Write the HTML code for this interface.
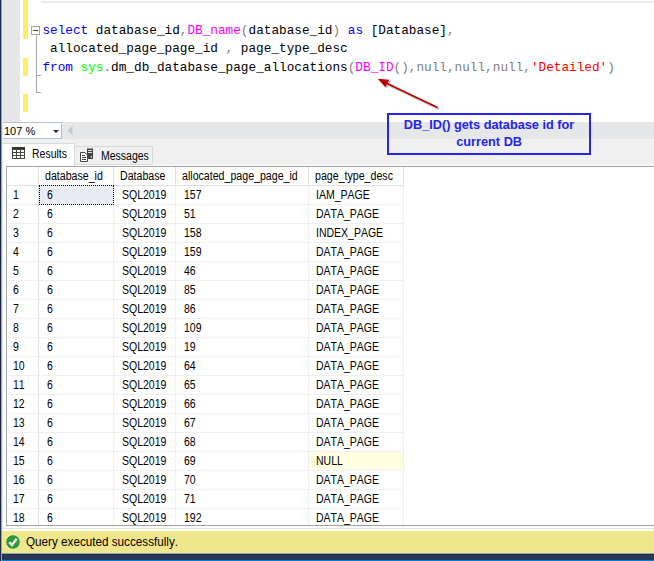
<!DOCTYPE html>
<html><head><meta charset="utf-8"><title>Query</title>
<style>
html,body{margin:0;padding:0;}
body{font-kerning:none;width:654px;height:561px;position:relative;overflow:hidden;background:#fff;font-family:"Liberation Sans",sans-serif;}
.abs{position:absolute;}
#lb{left:0;top:0;width:1px;height:561px;background:#1f2d4d;border-right:1px solid #95a1c3;}
#lb2{left:2px;top:0;width:1px;height:531px;background:#eaeaea;}
#margin{left:2px;top:0;width:18px;height:122px;background:#e6e7e8;}
.y{left:23px;width:5px;background:#ffee62;}
#topline{left:41px;top:0;width:613px;height:3px;background:#e9e9f3;border-top:1px solid #fff;box-sizing:border-box;border-left:1px solid #e9e9f3;}
.code{left:42.4px;font-family:"Liberation Mono",monospace;font-size:12.73px;line-height:18px;white-space:pre;color:#000;height:18px;}
.k{color:#0000ff}.f{color:#ff00ff}.g{color:#00ff00}.o{color:#808080}.s{color:#ff0000}
#zoombar{left:2px;top:122px;width:652px;height:17px;background:#e6e7e8;}
#combo{left:2px;top:122px;width:58px;height:15px;border:1px solid #b4c0d8;background:#fff;}
#combo span{position:absolute;left:1px;top:2px;font-size:11px;line-height:13px;color:#000;}
#tabsbg{left:2px;top:139px;width:652px;height:27px;background:#f0f0f0;}
#paneTop{left:2px;top:165px;width:652px;height:2px;background:#fff;}
#paneLine{left:6px;top:166px;width:648px;height:1px;background:#a0a0a8;}
#tabR{left:2px;top:143px;width:73px;height:23px;background:#fff;border:1px solid #dadada;border-bottom:none;border-left:none;padding-left:2px;box-sizing:border-box;}
#tabM{left:74px;top:146px;width:79px;height:19px;background:#f0f0f0;border:1px solid #d9d9d9;box-sizing:border-box;}
.tabtxt{font-size:12px;line-height:14px;color:#000;transform:scaleX(.875);transform-origin:0 0;white-space:nowrap;}
.grid{position:absolute;left:6px;top:166px;width:398px;height:359px;border-left:1px solid #a8a8b0;border-top:1px solid #a0a0a8;box-sizing:border-box;overflow:hidden;background:#fff;}
.hrow,.row{height:19px;position:relative;white-space:nowrap;}
.hrow{height:19px;}
.c{position:absolute;top:0;height:100%;box-sizing:border-box;border-right:1px solid #f0f0f0;border-bottom:1px solid #f0f0f0;font-size:12px;line-height:18px;color:#000;}
.hrow .c{border-right:1px solid #e0e0e0;border-bottom:1px solid #e0e0e0;}
.c0{left:0;width:32px;}
.c1{left:32px;width:75px;}
.c2{left:107px;width:62px;}
.c3{left:169px;width:133px;}
.c4{left:302px;width:95px;}
.t{display:inline-block;transform:scaleX(.875);transform-origin:0 50%;white-space:nowrap;position:absolute;top:0;}
.hrow .c .t{left:6px;}
.row .c .t{left:7.5px;}
.row .c0 .t{left:5.7px;}
.row .c4 .t{left:6.8px;}
.hrow .c .t{transform:scaleX(.885);}
.row .c0{border-right:1px solid #e0e0e0;}
.nul{background:#ffffe1;}
.nosel{}
#selbox{left:39px;top:185px;width:75px;height:20px;box-sizing:border-box;border:1px dotted #000;background:#e9edf3;}
#selbox span{position:absolute;left:6.5px;top:0px;font-size:12px;line-height:18px;transform:scaleX(.875);transform-origin:0 50%;}
#status{left:2px;top:531px;width:652px;height:22px;background:#f0e68c;}
#status .txt{position:absolute;left:23.6px;top:3px;font-size:12px;line-height:16px;color:#000;white-space:nowrap;transform:scaleX(.974);transform-origin:0 0;}
#bot1{left:0;top:554px;width:654px;height:6px;background:#293755;border-top:1px solid #1f2d4d;box-sizing:border-box;}
#bot0{left:1px;top:553px;width:653px;height:1px;background:#95a1c3;}
#bot2{left:0;top:560px;width:654px;height:1px;background:#0a7acc;}
#gl1{left:6px;top:525px;width:648px;height:1px;background:#a0a0a0;}
#gl2{left:2px;top:528px;width:652px;height:1px;background:#e3e3e3;}
#note{left:387px;top:113px;width:204px;height:42px;border:2px solid #2424ee;box-sizing:border-box;color:#2424ee;font-weight:bold;text-align:center;font-size:13.6px;line-height:17px;padding-top:1px;}
#note span{display:inline-block;white-space:nowrap;transform:scaleX(.937);transform-origin:50% 50%;}
</style></head><body>
<div class="abs" id="margin"></div>
<div class="abs y" style="top:0;height:39px"></div>
<div class="abs y" style="top:58px;height:18px"></div>
<div class="abs y" style="top:94px;height:18px"></div>
<div class="abs" id="topline"></div>
<svg class="abs" style="left:30px;top:24px" width="14" height="72" viewBox="0 0 14 72">
<path d="M6.5 11.5V68.5H11M6.5 51.5H11" fill="none" stroke="#a5a5a5" stroke-width="1"/>
<rect x="1.5" y="2.5" width="8" height="8" fill="#fff" stroke="#a5a5a5"/>
<path d="M3 6.5H8" stroke="#444" stroke-width="1"/>
</svg>
<div class="abs code" style="top:22px"><span class="k">select</span> database_id<span class="o">,</span><span class="f">DB_name</span><span class="o">(</span>database_id<span class="o">)</span> <span class="k">as</span> [Database]<span class="o">,</span></div>
<div class="abs code" style="top:40px"> allocated_page_page_id <span class="o">,</span> page_type_desc</div>
<div class="abs code" style="top:59px"><span class="k">from</span> <span class="g">sys</span><span class="o">.</span>dm_db_database_page_allocations<span class="o">(</span><span class="f">DB_ID</span><span class="o">(),null,null,null,</span><span class="s">'Detailed'</span><span class="o">)</span></div>
<div class="abs" id="zoombar"></div>
<div class="abs" id="combo"><span>107 %</span>
<svg class="abs" style="left:50px;top:7px" width="7" height="4" viewBox="0 0 7 4"><path d="M0 0H6L3 3Z" fill="#1b2a4a"/></svg></div>
<svg class="abs" style="left:67px;top:126px" width="6" height="9" viewBox="0 0 6 9"><path d="M5.5 0V9L0.5 4.5Z" fill="#c3c6cf"/></svg>
<div class="abs" id="tabsbg"></div>
<div class="abs" id="paneTop"></div><div class="abs" id="paneLine"></div>
<div class="abs" id="tabM">
<svg class="abs" style="left:4px;top:1px" width="16" height="15" viewBox="0 0 16 15">
<rect x="8" y="0.5" width="6" height="10.5" fill="#444"/>
<path d="M9 2.5H13M9 4.5H13" stroke="#ddd" stroke-width="1"/>
<rect x="11.5" y="8" width="1.5" height="1.5" fill="#ddd"/>
<path d="M1.5 4.5H6L8.500 7V13.500H1.500Z" fill="#fff" stroke="#444" stroke-width="1"/>
<path d="M3 7.500H6M3 9.500H7M3 11.500H7" stroke="#444" stroke-width="1"/>
</svg>
<div class="abs tabtxt" style="left:26px;top:2px">Messages</div>
</div>
<div class="abs" id="tabR">
<svg class="abs" style="left:10px;top:3px" width="14" height="13" viewBox="0 0 14 13">
<rect x="0" y="0" width="13" height="12" fill="#444"/><rect x="0" y="0" width="13" height="2" fill="#333"/>
<g fill="#fff"><rect x="1" y="3" width="3" height="2"/><rect x="5" y="3" width="3" height="2"/><rect x="9" y="3" width="3" height="2"/>
<rect x="1" y="6" width="3" height="2"/><rect x="5" y="6" width="3" height="2"/><rect x="9" y="6" width="3" height="2"/>
<rect x="1" y="9" width="3" height="2"/><rect x="5" y="9" width="3" height="2"/><rect x="9" y="9" width="3" height="2"/></g>
</svg>
<div class="abs tabtxt" style="left:30px;top:3px">Results</div>
</div>

<div class="grid">
<div class="hrow"><div class="c c0"></div><div class="c c1"><span class="t">database_id</span></div><div class="c c2"><span class="t">Database</span></div><div class="c c3"><span class="t">allocated_page_page_id</span></div><div class="c c4"><span class="t">page_type_desc</span></div></div>
<div class="row"><div class="c c0"><span class="t">1</span></div><div class="c c1"><span class="t">6</span></div><div class="c c2"><span class="t">SQL2019</span></div><div class="c c3"><span class="t">157</span></div><div class="c c4"><span class="t">IAM_PAGE</span></div></div>
<div class="row"><div class="c c0"><span class="t">2</span></div><div class="c c1"><span class="t">6</span></div><div class="c c2"><span class="t">SQL2019</span></div><div class="c c3"><span class="t">51</span></div><div class="c c4"><span class="t">DATA_PAGE</span></div></div>
<div class="row"><div class="c c0"><span class="t">3</span></div><div class="c c1"><span class="t">6</span></div><div class="c c2"><span class="t">SQL2019</span></div><div class="c c3"><span class="t">158</span></div><div class="c c4"><span class="t">INDEX_PAGE</span></div></div>
<div class="row"><div class="c c0"><span class="t">4</span></div><div class="c c1"><span class="t">6</span></div><div class="c c2"><span class="t">SQL2019</span></div><div class="c c3"><span class="t">159</span></div><div class="c c4"><span class="t">DATA_PAGE</span></div></div>
<div class="row"><div class="c c0"><span class="t">5</span></div><div class="c c1"><span class="t">6</span></div><div class="c c2"><span class="t">SQL2019</span></div><div class="c c3"><span class="t">46</span></div><div class="c c4"><span class="t">DATA_PAGE</span></div></div>
<div class="row"><div class="c c0"><span class="t">6</span></div><div class="c c1"><span class="t">6</span></div><div class="c c2"><span class="t">SQL2019</span></div><div class="c c3"><span class="t">85</span></div><div class="c c4"><span class="t">DATA_PAGE</span></div></div>
<div class="row"><div class="c c0"><span class="t">7</span></div><div class="c c1"><span class="t">6</span></div><div class="c c2"><span class="t">SQL2019</span></div><div class="c c3"><span class="t">86</span></div><div class="c c4"><span class="t">DATA_PAGE</span></div></div>
<div class="row"><div class="c c0"><span class="t">8</span></div><div class="c c1"><span class="t">6</span></div><div class="c c2"><span class="t">SQL2019</span></div><div class="c c3"><span class="t">109</span></div><div class="c c4"><span class="t">DATA_PAGE</span></div></div>
<div class="row"><div class="c c0"><span class="t">9</span></div><div class="c c1"><span class="t">6</span></div><div class="c c2"><span class="t">SQL2019</span></div><div class="c c3"><span class="t">19</span></div><div class="c c4"><span class="t">DATA_PAGE</span></div></div>
<div class="row"><div class="c c0"><span class="t">10</span></div><div class="c c1"><span class="t">6</span></div><div class="c c2"><span class="t">SQL2019</span></div><div class="c c3"><span class="t">64</span></div><div class="c c4"><span class="t">DATA_PAGE</span></div></div>
<div class="row"><div class="c c0"><span class="t">11</span></div><div class="c c1"><span class="t">6</span></div><div class="c c2"><span class="t">SQL2019</span></div><div class="c c3"><span class="t">65</span></div><div class="c c4"><span class="t">DATA_PAGE</span></div></div>
<div class="row"><div class="c c0"><span class="t">12</span></div><div class="c c1"><span class="t">6</span></div><div class="c c2"><span class="t">SQL2019</span></div><div class="c c3"><span class="t">66</span></div><div class="c c4"><span class="t">DATA_PAGE</span></div></div>
<div class="row"><div class="c c0"><span class="t">13</span></div><div class="c c1"><span class="t">6</span></div><div class="c c2"><span class="t">SQL2019</span></div><div class="c c3"><span class="t">67</span></div><div class="c c4"><span class="t">DATA_PAGE</span></div></div>
<div class="row"><div class="c c0"><span class="t">14</span></div><div class="c c1"><span class="t">6</span></div><div class="c c2"><span class="t">SQL2019</span></div><div class="c c3"><span class="t">68</span></div><div class="c c4"><span class="t">DATA_PAGE</span></div></div>
<div class="row"><div class="c c0"><span class="t">15</span></div><div class="c c1"><span class="t">6</span></div><div class="c c2"><span class="t">SQL2019</span></div><div class="c c3"><span class="t">69</span></div><div class="c c4 nul"><span class="t">NULL</span></div></div>
<div class="row"><div class="c c0"><span class="t">16</span></div><div class="c c1"><span class="t">6</span></div><div class="c c2"><span class="t">SQL2019</span></div><div class="c c3"><span class="t">70</span></div><div class="c c4"><span class="t">DATA_PAGE</span></div></div>
<div class="row"><div class="c c0"><span class="t">17</span></div><div class="c c1"><span class="t">6</span></div><div class="c c2"><span class="t">SQL2019</span></div><div class="c c3"><span class="t">71</span></div><div class="c c4"><span class="t">DATA_PAGE</span></div></div>
<div class="row"><div class="c c0"><span class="t">18</span></div><div class="c c1"><span class="t">6</span></div><div class="c c2"><span class="t">SQL2019</span></div><div class="c c3"><span class="t">192</span></div><div class="c c4"><span class="t">DATA_PAGE</span></div></div>
</div>
<div class="abs" id="gl1"></div>
<div class="abs" id="selbox"><span>6</span></div>
<div class="abs" id="gl2"></div>
<div class="abs" id="status">
<svg class="abs" style="left:3px;top:3px" width="16" height="16" viewBox="0 0 16 16">
<circle cx="8" cy="8" r="7.3" fill="#2f9a33" stroke="#e4efc8" stroke-width="1"/>
<path d="M4.300 8.300L7 11L11.600 4.800" fill="none" stroke="#fff" stroke-width="2.300"/>
</svg>
<div class="txt">Query executed successfully.</div>
</div>
<div class="abs" id="bot0"></div>
<div class="abs" id="bot1"></div>
<div class="abs" id="bot2"></div>
<svg class="abs" style="left:370px;top:72px" width="80" height="45" viewBox="370 72 80 45">
<g transform="translate(1.5,1.500)" opacity=".45"><path d="M437.500 107.500L386 83" stroke="#777" stroke-width="2" fill="none"/><path d="M377.700 78.800L389.300 79.800L385.400 87.200Z" fill="#777"/></g>
<path d="M437.500 107.500L386 83" stroke="#c00000" stroke-width="1.800" fill="none"/><path d="M377.700 78.800L389.300 79.800L385.400 87.200Z" fill="#c00000"/>
</svg>
<div class="abs" id="note"><span>DB_ID() gets database id for</span><br><span>current DB</span></div>
<div class="abs" id="lb2"></div>
<div class="abs" id="lb"></div>
</body></html>
